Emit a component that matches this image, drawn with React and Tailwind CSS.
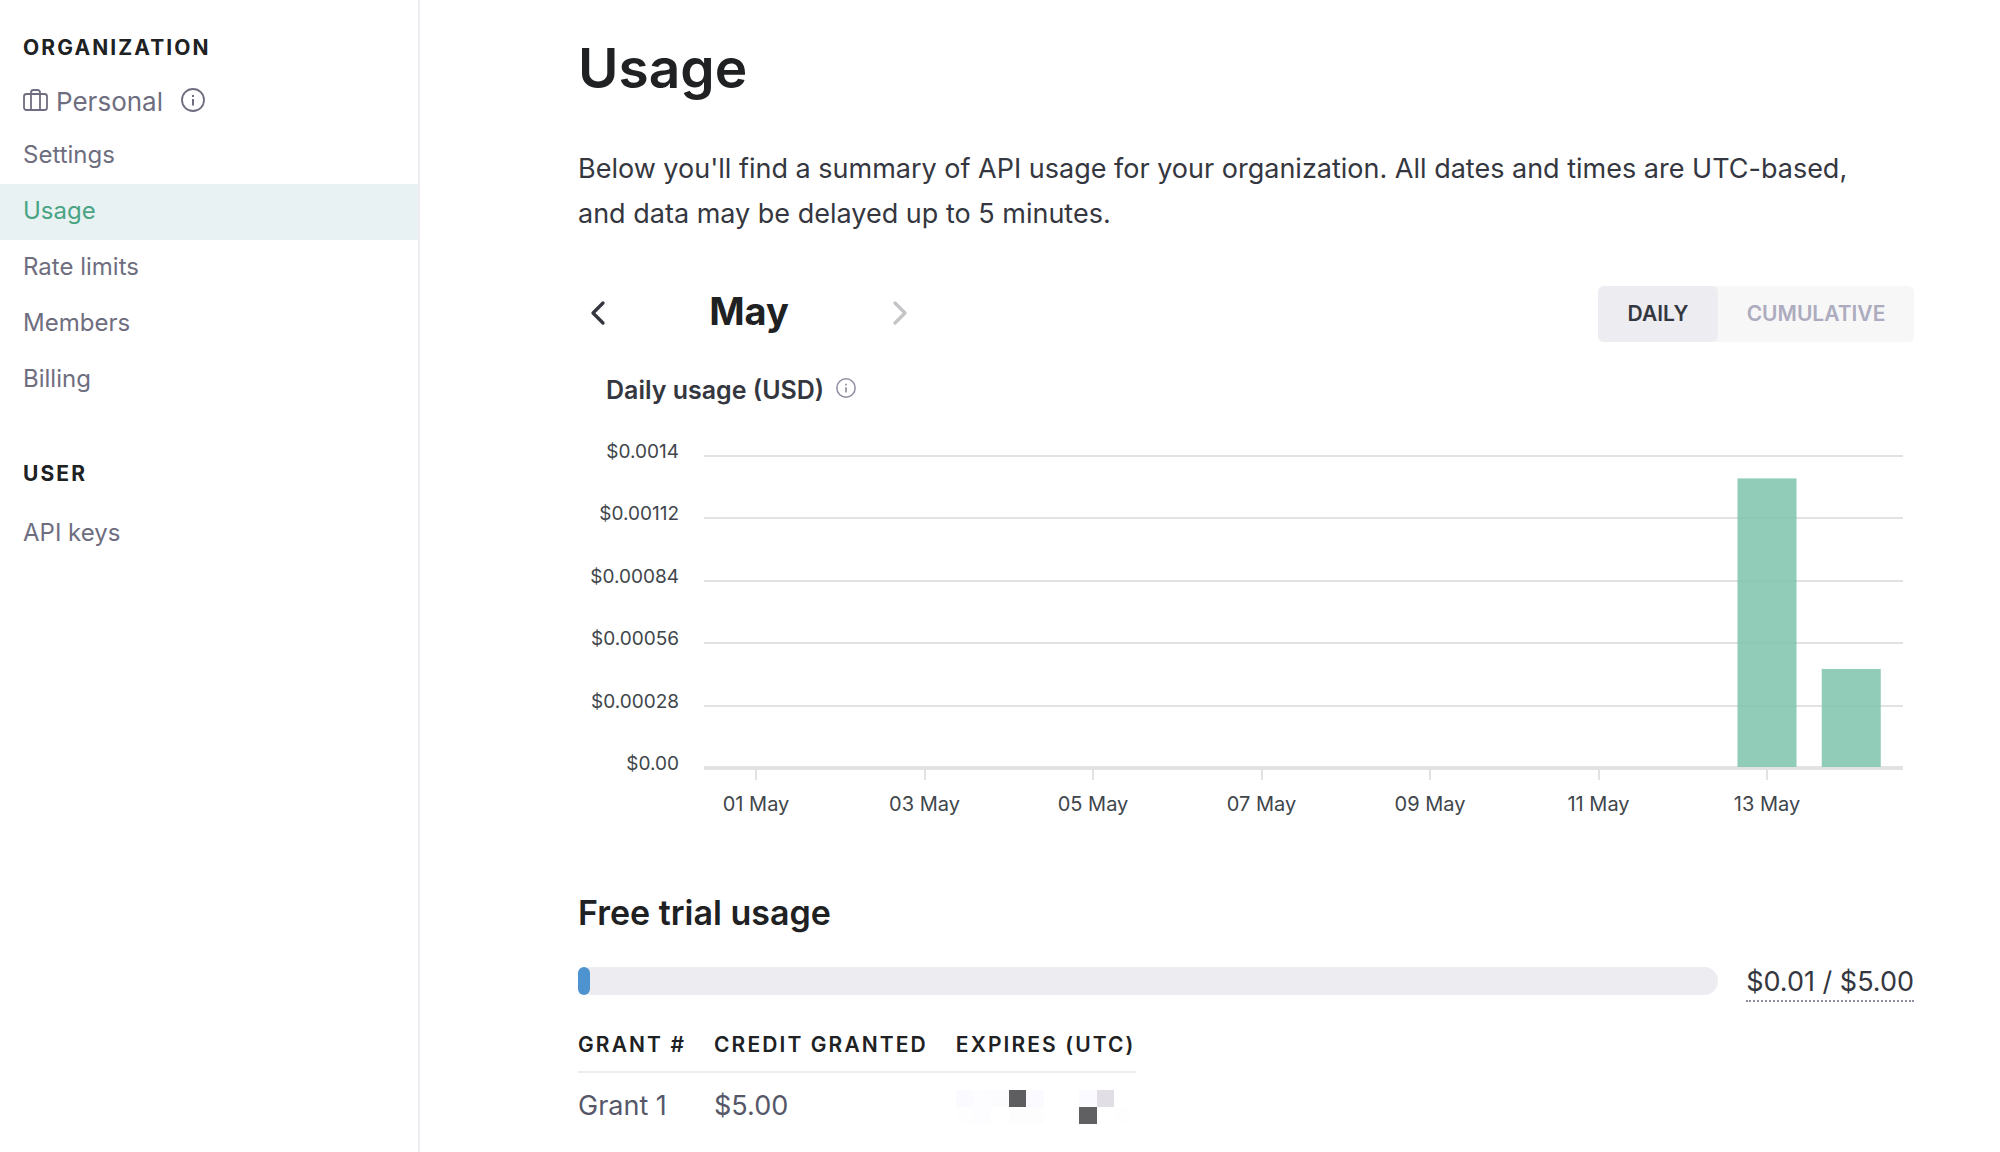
import React from "react";
import { ChevronLeft, ChevronRight } from "lucide-react";

const orgLinks = ["Settings", "Usage", "Rate limits", "Members", "Billing"];

const yLabels = [
  "$0.0014",
  "$0.00112",
  "$0.00084",
  "$0.00056",
  "$0.00028",
  "$0.00",
];

const xLabels = [
  "01 May",
  "03 May",
  "05 May",
  "07 May",
  "09 May",
  "11 May",
  "13 May",
];

const usage = [
  { day: 13, value: 0.001295 },
  { day: 14, value: 0.00044 },
];

// Chart geometry, in viewBox units
const plot = { left: 126, right: 1325, top: 22, bottom: 334, max: 0.0014 };
const band = 84.25;
const dayX = (day) => 178 + (day - 1) * band;

const redacted = [
  ["#fbfaff", "#fdfdff", "#fcfcff", "#5e5e60", "#fbfaff", "#ffffff", "#ffffff", "#fbfaff", "#e1dfe5", "#ffffff"],
  ["#fefeff", "#fdfdff", "#ffffff", "#fdfdfe", "#fdfdfe", "#ffffff", "#ffffff", "#606062", "#ffffff", "#fefeff"],
];

function InfoIcon({ className }) {
  return (
    <svg viewBox="0 0 24 24" fill="none" stroke="currentColor" className={className}>
      <circle cx="12" cy="12" r="11" strokeWidth="1.8" />
      <path d="M12 11v6.5" strokeWidth="2" />
      <path d="M12 7v2" strokeWidth="2" />
    </svg>
  );
}

function BriefcaseIcon({ className }) {
  return (
    <svg viewBox="0 0 25 22" fill="none" stroke="currentColor" strokeWidth="1.8" className={className}>
      <rect x="1" y="5" width="23" height="16" rx="2.5" />
      <path d="M8 21V3.500A2.500 2.500 0 0 1 10.500 1h4A2.500 2.500 0 0 1 17 3.500V21" />
    </svg>
  );
}

function UsageChart() {
  const step = (plot.bottom - plot.top) / (yLabels.length - 1);

  return (
    <svg
      viewBox="0 0 1336 386"
      className="block w-full h-auto"
      role="img"
      aria-label="Daily usage in USD"
    >
      {yLabels.map((label, i) => {
        const y = Math.round(plot.top + i * step);
        const last = i === yLabels.length - 1;
        return (
          <g key={label}>
            <rect
              x={plot.left}
              y={last ? y - 1 : y}
              width={plot.right - plot.left}
              height={last ? 4 : 2}
              fill="#e2e2e3"
            />
            <text x="101" y={y + 3} textAnchor="end" fontSize="19" fill="#40464b">
              {label}
            </text>
          </g>
        );
      })}

      {xLabels.map((label, i) => {
        const x = dayX(1 + i * 2);
        return (
          <g key={label}>
            <rect x={Math.round(x) - 1} y="337" width="2" height="10" fill="#e2e2e3" />
            <text x={x} y="378" textAnchor="middle" fontSize="20" fill="#40464b">
              {label}
            </text>
          </g>
        );
      })}

      {usage.map(({ day, value }) => {
        const h = (value / plot.max) * (plot.bottom - plot.top);
        return (
          <rect
            key={day}
            x={dayX(day) - 29.5}
            y={plot.bottom - h}
            width="59"
            height={h}
            fill="#7fc4ae"
            fillOpacity="0.86"
          />
        );
      })}
    </svg>
  );
}

export default function App() {
  return (
    <div className="flex min-h-screen bg-white font-['Inter',sans-serif]">
      {/* Sidebar */}
      <aside className="w-[420px] shrink-0 border-r-2 border-[#ececf1] pt-8">
        <h2 className="px-[23px] text-[21px] leading-8 font-bold tracking-widest text-[#202123]">
          ORGANIZATION
        </h2>
        <div className="flex items-center px-[23px] mt-3.5 mb-0.5 h-12 text-[#6e6e80]">
          <BriefcaseIcon className="w-[25px] h-[22px] mr-2 mb-1" />
          <span className="text-[26px] leading-8">Personal</span>
          <InfoIcon className="w-6 h-6 ml-[18px] mb-1" />
        </div>
        <nav>
          {orgLinks.map((label) => (
            <a
              key={label}
              href="#"
              className={`flex items-center h-14 px-[23px] pb-0.5 text-2xl ${
                label === "Usage" ? "bg-[#e8f2f3] text-[#4aa483]" : "text-[#6e6e80]"
              }`}
            >
              {label}
            </a>
          ))}
        </nav>

        <h2 className="px-[23px] mt-[50px] text-[21px] leading-8 font-bold tracking-widest text-[#202123]">
          USER
        </h2>
        <nav className="mt-4">
          <a href="#" className="flex items-center h-14 px-[23px] pb-0.5 text-2xl text-[#6e6e80]">
            API keys
          </a>
        </nav>
      </aside>

      {/* Main */}
      <main className="flex-1 min-w-0 pl-[158px] pr-[86px] pt-9 text-[#353740]">
        <h1 className="text-[55px] leading-16 font-semibold text-[#202123]">Usage</h1>
        <p className="mt-[46px] pr-8 text-[27px] leading-[45px]">
          Below you'll find a summary of API usage for your organization. All dates and times are
          UTC-based, and data may be delayed up to 5 minutes.
        </p>

        <div className="flex items-center justify-between mt-[50px]">
          <div className="flex items-center justify-between w-[342px] pb-0.5">
            <button aria-label="Previous month">
              <ChevronLeft className="w-10 h-10" strokeWidth={2} />
            </button>
            <h2 className="pb-1 text-[38px] leading-12 font-bold text-[#202123]">May</h2>
            <button aria-label="Next month" disabled className="text-[#c5c5c7]">
              <ChevronRight className="w-10 h-10" strokeWidth={2} />
            </button>
          </div>
          <div className="flex h-14 rounded-md bg-[#f7f7f8] text-[21px] font-semibold">
            <button className="w-[120px] rounded-md bg-[#ececf1]">DAILY</button>
            <button className="w-[196px] text-[#acacbe]">CUMULATIVE</button>
          </div>
        </div>

        <div className="flex items-center gap-3 mt-8 pl-7">
          <h3 className="text-[25px] leading-8 font-semibold">Daily usage (USD)</h3>
          <InfoIcon className="w-5 h-5 mb-1 text-[#8e8ea0]" />
        </div>

        <div className="mt-[27px]">
          <UsageChart />
        </div>

        <h2 className="mt-[70px] text-[34px] leading-12 font-semibold text-[#202123]">
          Free trial usage
        </h2>
        <div className="flex items-center gap-7 mt-[23px]">
          <div className="flex-1 h-7 rounded-full bg-[#ececf1]">
            <div className="w-3 h-full rounded-md bg-[#4c93d0]" />
          </div>
          <span className="pt-1 border-b-2 border-dotted border-[#8e8ea0] text-[27px] leading-9">
            $0.01 / $5.00
          </span>
        </div>

        <table className="mt-4 text-left">
          <thead>
            <tr className="border-b-2 border-[#ececf1] text-[21px] tracking-widest text-[#202123]">
              <th className="h-[54px] pr-7 font-semibold">GRANT #</th>
              <th className="h-[54px] pr-7 font-semibold">CREDIT GRANTED</th>
              <th className="h-[54px] font-semibold">EXPIRES (UTC)</th>
            </tr>
          </thead>
          <tbody>
            <tr className="text-[27px] text-[#565869]">
              <td className="h-[68px]">Grant 1</td>
              <td className="h-[68px]">$5.00</td>
              <td className="h-[68px]">
                <div className="grid grid-cols-10 w-44">
                  {redacted.flat().map((color, i) => (
                    <div key={i} className="h-[17px]" style={{ backgroundColor: color }} />
                  ))}
                </div>
              </td>
            </tr>
          </tbody>
        </table>
      </main>
    </div>
  );
}
